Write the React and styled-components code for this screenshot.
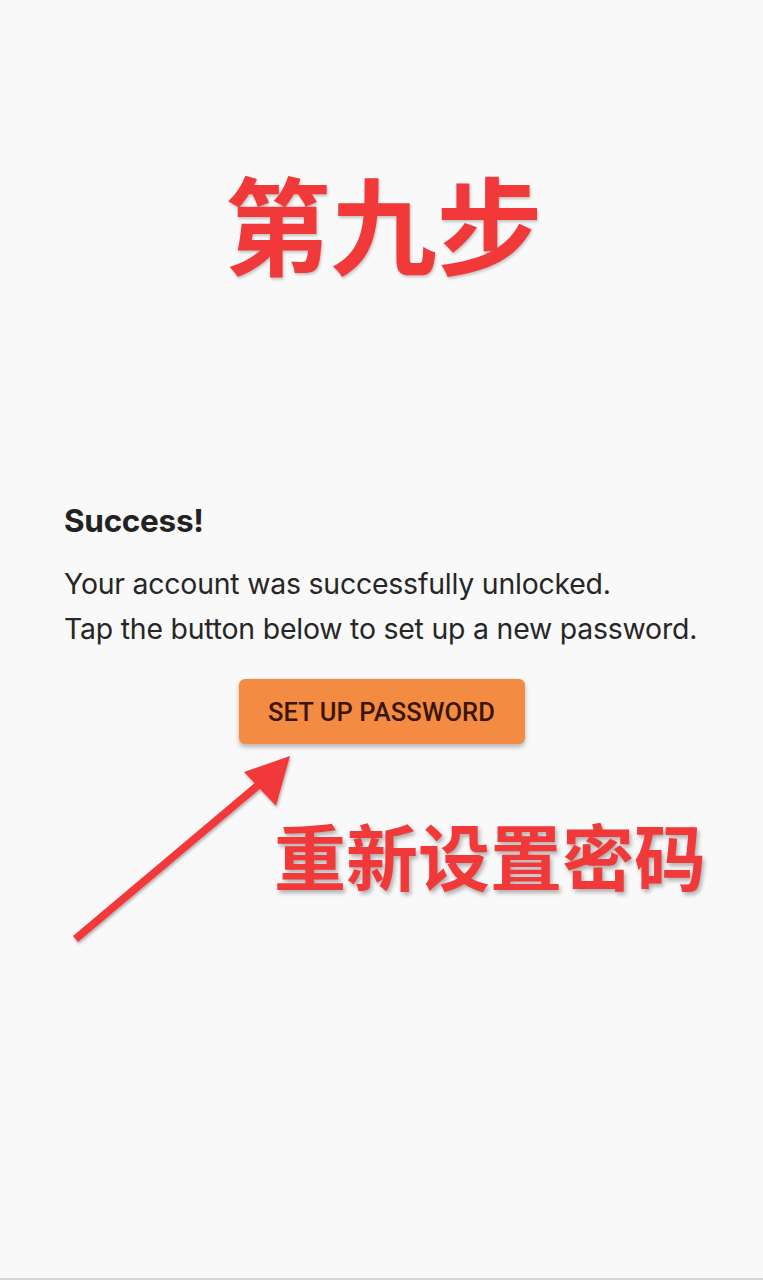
import React from "react";
import styled, { createGlobalStyle } from "styled-components";

const GlobalStyle = createGlobalStyle`
  html, body {
    margin: 0;
    padding: 0;
    background: #f9f9f9;
  }
  * { box-sizing: border-box; }
`;

const Page = styled.div`
  position: relative;
  width: 763px;
  height: 1280px;
  background: #f9f9f9;
  border-bottom: 2px solid #d6d6d6;
  overflow: hidden;
`;

const StepTitle = styled.h1`
  margin: 0;
  padding-top: 164px;
  text-align: center;
  font-family: "Noto Sans CJK SC", sans-serif;
  font-weight: 700;
  font-size: 106px;
  line-height: 114px;
  color: #f2393a;
  text-shadow: 1px 2px 3px rgba(0, 0, 0, 0.22);
  padding-left: 4px;
`;

const Card = styled.section`
  margin-top: 221px;
  padding: 0 64px;
  font-family: "Inter", "Roboto", sans-serif;
  color: #222;
`;

const Heading = styled.h2`
  margin: 0;
  font-size: 31.5px;
  font-weight: 700;
  line-height: 44px;
  letter-spacing: -0.3px;
  color: #222;
`;

const Body = styled.p`
  margin: 18px 0 0;
  font-size: 28.4px;
  font-weight: 400;
  line-height: 45px;
  letter-spacing: -0.2px;
  color: #262626;
`;

const ButtonRow = styled.div`
  display: flex;
  justify-content: center;
  margin-top: 28px;
`;

const Button = styled.button`
  width: 286px;
  height: 65px;
  border: none;
  border-radius: 6px;
  background: #f38b43;
  color: #3b1508;
  font-family: "Roboto", sans-serif;
  font-weight: 500;
  font-size: 25.5px;
  letter-spacing: 0.1px;
  box-shadow: 0 3px 5px rgba(0, 0, 0, 0.28);
`;

const Annotation = styled.div`
  margin-top: 70px;
  padding-left: 274px;
  font-family: "Noto Sans CJK SC", sans-serif;
  font-weight: 700;
  font-size: 72px;
  line-height: 80px;
  color: #f2393a;
  text-shadow: 2px 3px 4px rgba(0, 0, 0, 0.3);
  white-space: nowrap;
`;

const Arrow = styled.svg`
  position: absolute;
  left: 0;
  top: 0;
  pointer-events: none;
`;

export default function App() {
  return (
    <>
      <GlobalStyle />
      <Page>
        <StepTitle>第九步</StepTitle>
        <Card>
          <Heading>Success!</Heading>
          <Body>
            Your account was successfully unlocked.
            <br />
            Tap the button below to set up a new password.
          </Body>
          <ButtonRow>
            <Button>SET UP PASSWORD</Button>
          </ButtonRow>
        </Card>
        <Annotation>重新设置密码</Annotation>
        <Arrow width="763" height="1280" viewBox="0 0 763 1280">
          <defs>
            <filter id="sh" x="-20%" y="-20%" width="140%" height="140%">
              <feDropShadow dx="1" dy="2" stdDeviation="1.5" floodOpacity="0.3" />
            </filter>
          </defs>
          <g filter="url(#sh)" fill="#f2393a">
            <path d="M73 936 L263 776 L268 782 L78 942 Z" />
            <path d="M290 756 L244 772 L276 806 Z" />
          </g>
        </Arrow>
      </Page>
    </>
  );
}
